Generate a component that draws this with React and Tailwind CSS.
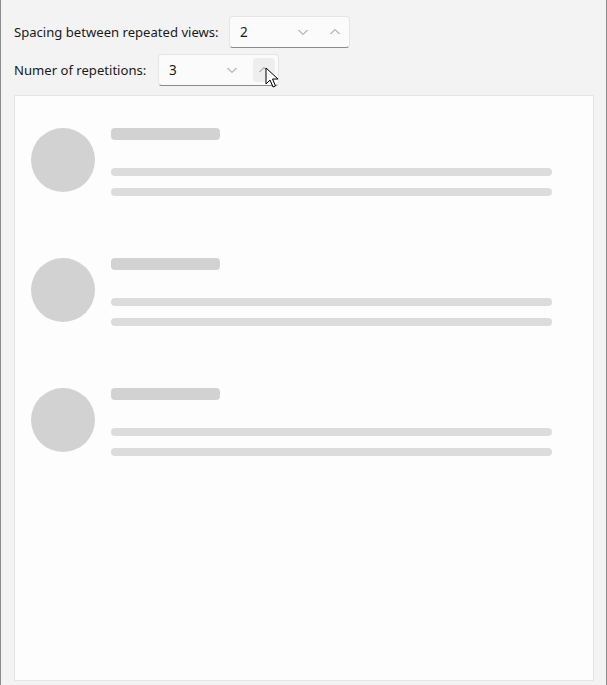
import React from "react";

function Chevron({ up }) {
  return (
    <svg width="12" height="12" viewBox="0 0 12 12" fill="none">
      <path
        d={up ? "M1.5 8 L6 3.5 L10.5 8" : "M1.5 4 L6 8.5 L10.5 4"}
        stroke="#8a8a8a"
        strokeWidth="1"
      />
    </svg>
  );
}

function NumberBox({ value, hoverUp }) {
  return (
    <div className="relative flex h-[32px] w-[121px] items-center rounded-[4px] border border-[#e5e5e5] border-b-[#8a8a8a] bg-[#fbfbfb]">
      <span className="flex-1 pl-[10px] text-[13.5px] text-[#1a1a1a]">{value}</span>
      <div className="flex h-full items-center pr-[3px]">
        <div className="flex h-[24px] w-[22px] items-center justify-center">
          <Chevron />
        </div>
        <div
          className="ml-[10px] flex h-[24px] w-[22px] items-center justify-center rounded-[4px]"
          style={{ background: hoverUp ? "#eeeeee" : "transparent" }}
        >
          <Chevron up />
        </div>
      </div>
      {hoverUp && (
        <svg className="absolute left-[106px] top-[12px]" width="14" height="22" viewBox="0 0 14 22">
          <path
            d="M1 1 L1 17 L5 13 L8 20 L10.5 19 L7.5 12 L13 12 Z"
            fill="#ffffff"
            stroke="#000000"
            strokeWidth="1"
            strokeLinejoin="round"
          />
        </svg>
      )}
    </div>
  );
}

function SkeletonItem() {
  return (
    <div className="flex">
      <div className="h-[64px] w-[64px] shrink-0 rounded-full bg-[#d2d2d2]" />
      <div className="ml-[16px] flex flex-1 flex-col pr-[41px]">
        <div className="h-[12px] w-[109px] rounded-[4px] bg-[#d2d2d2]" />
        <div className="mt-[28px] h-[8px] rounded-full bg-[#dcdcdc]" />
        <div className="mt-[12px] h-[8px] rounded-full bg-[#dcdcdc]" />
      </div>
    </div>
  );
}

export default function App() {
  return (
    <div
      className="flex h-[685px] w-[607px] flex-col border-x border-x-[#8c8c8c] bg-[#f3f3f3]"
      style={{ fontFamily: "'Segoe UI', 'Noto Sans', 'Open Sans', sans-serif" }}
    >
      <div className="mt-[16px] flex h-[32px] items-center pl-[13px]">
        <span className="w-[215px] pt-[2px] text-[13.1px] text-[#1a1a1a]">Spacing between repeated views:</span>
        <NumberBox value="2" />
      </div>
      <div className="mt-[6px] flex h-[32px] items-center pl-[13px]">
        <span className="w-[144px] pt-[2px] text-[13.1px] text-[#1a1a1a]">Numer of repetitions:</span>
        <NumberBox value="3" hoverUp />
      </div>
      <div className="ml-[13px] mr-[12px] mt-[9px] flex h-[586px] flex-col gap-[62px] border border-[#e5e5e5] bg-[#fdfdfd] pl-[16px] pt-[32px]">
        <SkeletonItem />
        <SkeletonItem />
        <SkeletonItem />
      </div>
    </div>
  );
}
